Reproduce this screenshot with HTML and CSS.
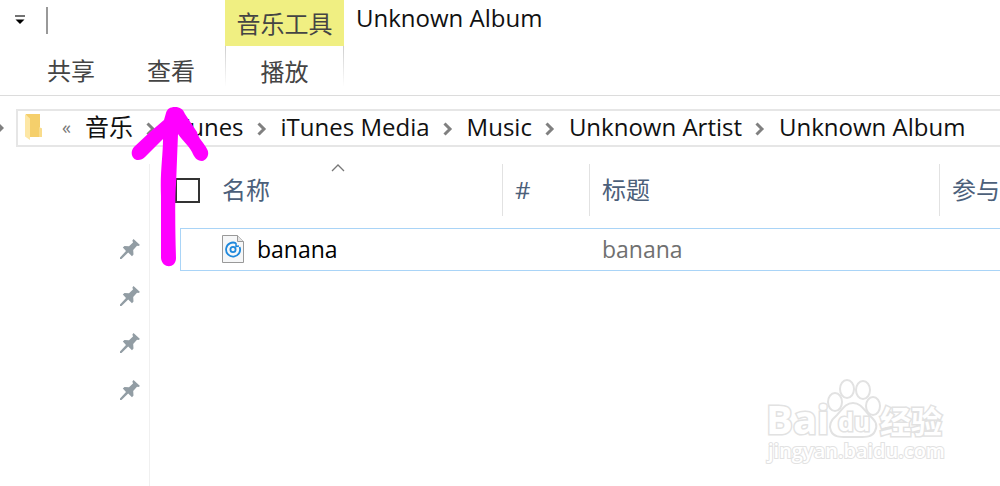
FILE: index.html
```
<!DOCTYPE html>
<html lang="zh-CN">
<head>
    <meta charset="UTF-8">
    <meta name="viewport" content="width=device-width, initial-scale=1.0">
    <title>Unknown Album</title>
    <link rel="stylesheet" href="styles.css">
</head>
<body>

    <header class="ribbon">
        <div class="ribbon-left">
            <div class="quick-access">
                <button type="button" class="quick-menu">
                    <svg width="12" height="10" viewBox="0 0 12 10"><path d="M1 1h10" stroke="#444" stroke-width="1.500"/><path d="M1.500 4.500h9L6 9z" fill="#000"/></svg>
                </button>
                <span class="divider"></span>
            </div>
            <nav class="tabs">
                <button type="button" class="tab">共享</button>
                <button type="button" class="tab">查看</button>
            </nav>
        </div>
        <div class="ribbon-context">
            <div class="context-title">音乐工具</div>
            <button type="button" class="tab context-tab">播放</button>
        </div>
        <h1 class="window-title">Unknown Album</h1>
    </header>

    <div class="address-row">
        <svg class="nav-arrow" width="4" height="12" viewBox="0 0 4 12"><path d="M0 2l4 4-4 4z" fill="#808080"/></svg>
        <nav class="address-bar">
            <svg class="folder" width="20" height="28" viewBox="0 0 20 28">
                <path d="M2 1h14v14l2 1v8H4z" fill="#f5cf6b"/>
                <path d="M15 14l3 1.500V24h-3z" fill="#f9dc8c"/>
                <path d="M1 1l5 4.500V27L1 23.500z" fill="#fde7a5"/>
            </svg>
            <span class="more">«</span>
            <a href="#" class="crumb">音乐</a>
            <svg class="chevron" width="10" height="14" viewBox="0 0 10 14"><path d="M1.500 1.500L7 7l-5.500 5.500"/></svg>
            <a href="#" class="crumb">iTunes</a>
            <svg class="chevron" width="10" height="14" viewBox="0 0 10 14"><path d="M1.500 1.500L7 7l-5.500 5.500"/></svg>
            <a href="#" class="crumb">iTunes Media</a>
            <svg class="chevron" width="10" height="14" viewBox="0 0 10 14"><path d="M1.500 1.500L7 7l-5.500 5.500"/></svg>
            <a href="#" class="crumb">Music</a>
            <svg class="chevron" width="10" height="14" viewBox="0 0 10 14"><path d="M1.500 1.500L7 7l-5.500 5.500"/></svg>
            <a href="#" class="crumb">Unknown Artist</a>
            <svg class="chevron" width="10" height="14" viewBox="0 0 10 14"><path d="M1.500 1.500L7 7l-5.500 5.500"/></svg>
            <a href="#" class="crumb">Unknown Album</a>
        </nav>
    </div>

    <main class="content">
        <ul class="sidebar">
            <li><svg class="pin" width="20" height="20" viewBox="0 0 20 20"><path d="M13.500 0L20 6l-1.500 1-1.500-.3-3.800 4.300.3 4.500-1.500 1.700-3.800-3.700L1.500 20H0v-1.500l6-6.500-3.200-3.500L4.500 7l4.500.2L13 3.500l-.6-2z"/></svg></li>
            <li><svg class="pin" width="20" height="20" viewBox="0 0 20 20"><path d="M13.500 0L20 6l-1.500 1-1.500-.3-3.800 4.300.3 4.500-1.500 1.700-3.800-3.700L1.500 20H0v-1.500l6-6.500-3.200-3.500L4.500 7l4.500.2L13 3.500l-.6-2z"/></svg></li>
            <li><svg class="pin" width="20" height="20" viewBox="0 0 20 20"><path d="M13.500 0L20 6l-1.500 1-1.500-.3-3.800 4.300.3 4.500-1.500 1.700-3.800-3.700L1.500 20H0v-1.500l6-6.500-3.200-3.500L4.500 7l4.500.2L13 3.500l-.6-2z"/></svg></li>
            <li><svg class="pin" width="20" height="20" viewBox="0 0 20 20"><path d="M13.500 0L20 6l-1.500 1-1.500-.3-3.800 4.300.3 4.500-1.500 1.700-3.800-3.700L1.500 20H0v-1.500l6-6.500-3.200-3.500L4.500 7l4.500.2L13 3.500l-.6-2z"/></svg></li>
        </ul>

        <div class="files">
            <table class="file-table">
                <colgroup>
                    <col class="col-name">
                    <col class="col-number">
                    <col class="col-title">
                    <col>
                </colgroup>
                <thead>
                    <tr>
                        <th>
                            <div class="head-cell head-name">
                                <input type="checkbox" id="selectAll" class="select-all">
                                <label for="selectAll">名称</label>
                                <svg class="sort" width="14" height="8" viewBox="0 0 14 8"><path d="M1 7l6-6 6 6" fill="none" stroke="#777" stroke-width="1.300"/></svg>
                            </div>
                        </th>
                        <th><div class="head-cell">#</div></th>
                        <th><div class="head-cell">标题</div></th>
                        <th><div class="head-cell head-last">参与创作的艺术家</div></th>
                    </tr>
                </thead>
                <tbody>
                    <tr>
                        <td>
                            <div class="file-name">
                                <svg width="22" height="28" viewBox="0 0 22 28">
                                    <path d="M.5.500h15l6 6v21H.5z" fill="#f6f7f8" stroke="#999"/>
                                    <path d="M15.500.500v6h6" fill="#e4e4e4" stroke="#999"/>
                                    <path d="M14 8.200A7 7 0 1 0 17.600 12" fill="none" stroke="#1e88dc" stroke-width="1.800"/>
                                    <circle cx="11" cy="14.500" r="2.600" fill="none" stroke="#1e88dc" stroke-width="1.800"/>
                                    <path d="M14 8v3.500l3-.5" fill="none" stroke="#1e88dc" stroke-width="1.500"/>
                                </svg>
                                <span>banana</span>
                            </div>
                        </td>
                        <td></td>
                        <td class="muted">banana</td>
                        <td></td>
                    </tr>
                </tbody>
            </table>
        </div>
    </main>

    <!-- hand-drawn arrow pointing at the 查看 tab -->
    <svg class="pointer" width="80" height="162" viewBox="0 0 80 162">
        <path d="M45 1C40 1 37 3 36 7L34 14L20 26L4 41C-1 47 3 54 8 54C11 54 13 53 15 51L33 33C33 50 30 65 31 90V152C32 163 46 163 46 152C45 120 45 90 46 79L48 28C52 34 59 40 62 46C64 51 67 55 72 55C77 54 80 48 77 43C74 37 68 32 67 26L55 8C53 3 50 1 45 1z"/>
    </svg>

    <svg class="watermark" width="182" height="90" viewBox="0 0 182 90">
        <g class="outline">
            <text x="1" y="57" class="wm-logo">Bai</text>
            <ellipse cx="70" cy="25" rx="7" ry="9"/>
            <ellipse cx="82" cy="12" rx="7" ry="9"/>
            <ellipse cx="98" cy="13" rx="7" ry="9"/>
            <ellipse cx="108" cy="29" rx="7" ry="9"/>
            <path d="M88 26c8 0 11 7 16 12 7 6 9 10 6 16-3 7-10 6-22 6s-19 1-22-6c-3-6 0-11 6-16 5-5 8-12 16-12z"/>
            <text x="73" y="54" class="wm-du">du</text>
            <text x="115" y="56" class="wm-cjk">经验</text>
            <text x="3" y="81" class="wm-url">jingyan.baidu.com</text>
        </g>
    </svg>

</body>
</html>
```
FILE: styles.css
```
* {
    box-sizing: border-box;
}
body {
    position: relative;
    display: flex;
    flex-direction: column;
    min-height: 100vh;
    margin: 0;
    overflow: hidden;
    background-color: white;
    color: #111;
    font-family: "Open Sans", "Noto Sans CJK SC", sans-serif;
    font-size: 24px;
    line-height: 36px;
}
button {
    padding: 0;
    border: none;
    background: none;
    font: inherit;
    color: inherit;
}
svg {
    flex: none;
}

/* ribbon */
.ribbon {
    display: flex;
    height: 96px;
    border-bottom: 1px solid #dcdcdc;
}
.ribbon-left {
    width: 225px;
}
.quick-access {
    display: flex;
    align-items: center;
    gap: 20px;
    height: 46px;
    padding: 0 0 6px 14px;
}
.quick-menu {
    display: flex;
}
.divider {
    width: 2px;
    height: 27px;
    background-color: #999;
}
.tabs {
    display: flex;
    gap: 52px;
    padding-left: 47px;
}
.tab {
    height: 50px;
    color: #444;
}
.ribbon-context {
    display: flex;
    flex-direction: column;
    width: 119px;
}
.context-title {
    height: 46px;
    padding-top: 6px;
    background-color: #f0ef82;
    color: #444;
    text-align: center;
}
.context-tab {
    height: 40px;
    padding-top: 8px;
    border: 1px solid;
    border-width: 0 1px;
    border-image: linear-gradient(#ccc, #fff) 1;
}
.window-title {
    margin: 0;
    padding-left: 12px;
    font-size: 24px;
    font-weight: normal;
}

/* address bar */
.address-row {
    display: flex;
    align-items: center;
    gap: 12px;
    margin-top: 13px;
}
.address-bar {
    display: flex;
    flex: 1;
    align-items: center;
    min-width: 0;
    height: 38px;
    padding: 0 0 2px 6px;
    border: 2px solid #e6e6e6;
    border-right: none;
    white-space: nowrap;
}
.more {
    margin: 0 14px 0 18px;
    color: #777;
    font-size: 18px;
}
.crumb {
    color: #111;
    text-decoration: none;
}
.chevron {
    margin: 3px 14px 0 13px;
    fill: none;
    stroke: #808080;
    stroke-width: 3;
}

/* content */
.content {
    display: flex;
    flex: 1;
    margin-top: 17px;
}
.sidebar {
    width: 150px;
    margin: 0;
    padding: 61px 9px 0 0;
    border-right: 1px solid #f0f0f0;
    list-style: none;
}
.sidebar li {
    display: flex;
    align-items: center;
    justify-content: flex-end;
    height: 47px;
}
.pin {
    fill: #929da4;
}
.files {
    flex: 1;
    min-width: 0;
    padding-left: 30px;
}
.file-table {
    width: 100%;
    table-layout: fixed;
    border-spacing: 0;
}
.col-name {
    width: 323px;
}
.col-number {
    width: 87px;
}
.col-title {
    width: 350px;
}
.file-table th {
    padding: 0 0 12px;
    font-weight: normal;
    text-align: left;
    color: #4c607a;
}
.head-cell {
    display: flex;
    align-items: center;
    height: 52px;
    padding-left: 12px;
    border-right: 1px solid #e2e2e2;
    white-space: nowrap;
}
.head-name {
    position: relative;
    gap: 22px;
    padding-left: 0;
}
.head-last {
    border-right: none;
    overflow: hidden;
}
.select-all {
    width: 25px;
    height: 25px;
    margin: 0 0 0 -5px;
    appearance: none;
    border: 2px solid #333;
    background-color: white;
}
.sort {
    position: absolute;
    top: 0;
    left: 151px;
}
.file-table td {
    height: 43px;
    padding: 0 0 2px 12px;
    border: 1px solid #a9d4f7;
    border-width: 1px 0;
    font-size: 23px;
}
.file-table td:first-child {
    padding-left: 41px;
    border-left-width: 1px;
}
.file-name {
    display: flex;
    align-items: center;
    gap: 13px;
    color: #000;
}
.file-table .muted {
    color: #707070;
}

/* overlays */
.pointer {
    position: absolute;
    top: 106px;
    left: 130px;
    fill: #ff00ff;
}
.watermark {
    position: absolute;
    right: 53px;
    bottom: 19px;
}
.outline {
    fill: white;
    stroke: #e2e2e2;
    stroke-width: 2;
}
.outline text {
    font-family: "Open Sans", "Noto Sans CJK SC", sans-serif;
    font-weight: bold;
    paint-order: stroke;
    stroke-width: 3;
}
.outline .wm-logo {
    font-size: 40px;
}
.outline .wm-du {
    font-size: 25px;
}
.outline .wm-cjk {
    font-size: 31px;
}
.outline .wm-url {
    font-size: 20px;
    font-weight: 600;
    stroke-width: 2;
}
```
